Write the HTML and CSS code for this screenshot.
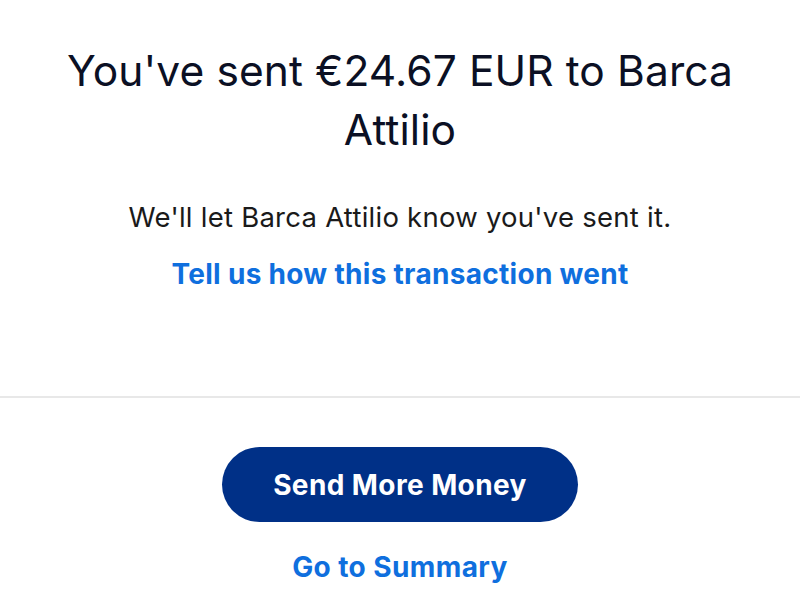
FILE: index.html
```html
<!DOCTYPE html>
<html>
<head>
<meta charset="utf-8">
<link rel="stylesheet" href="styles.css">
</head>
<body>
<main class="page">
  <section class="top">
    <h1 class="title">You've sent €24.67 EUR to Barca Attilio</h1>
    <p class="note">We'll let Barca Attilio know you've sent it.</p>
    <a class="link feedback" href="#">Tell us how this transaction went</a>
  </section>
  <section class="actions">
    <button class="primary">Send More Money</button>
    <a class="link summary" href="#">Go to Summary</a>
  </section>
</main>
</body>
</html>
```
FILE: styles.css
```css
html, body {
  margin: 0;
  padding: 0;
  background: #fff;
}
body {
  font-family: Inter, "Noto Sans", sans-serif;
  color: #111827;
}
.page {
  width: 800px;
  height: 598px;
  display: flex;
  flex-direction: column;
}
.top {
  height: 398px;
  box-sizing: border-box;
  border-bottom: 2px solid #e8e8e8;
  display: flex;
  flex-direction: column;
  align-items: center;
  text-align: center;
  padding-top: 41px;
}
.title {
  margin: 0;
  width: 700px;
  font-size: 42.5px;
  font-weight: 400;
  line-height: 59px;
  letter-spacing: 0.1px;
  color: #0b1024;
}
.note {
  margin: 41px 0 0;
  font-size: 27.5px;
  line-height: 34px;
  letter-spacing: 0.25px;
  color: #1a1a1a;
}
.link {
  color: #0f6fde;
  font-weight: 700;
  text-decoration: none;
}
.feedback {
  margin-top: 23px;
  font-size: 28px;
  line-height: 34px;
  letter-spacing: 0.3px;
}
.actions {
  display: flex;
  flex-direction: column;
  align-items: center;
  padding-top: 49px;
}
.primary {
  width: 356px;
  height: 75px;
  border: none;
  border-radius: 38px;
  background: #003087;
  color: #fff;
  font-family: inherit;
  font-size: 28px;
  font-weight: 700;
  letter-spacing: 0.4px;
  padding: 0;
}
.summary {
  margin-top: 28px;
  font-size: 28px;
  line-height: 34px;
  letter-spacing: 0.4px;
}
```
